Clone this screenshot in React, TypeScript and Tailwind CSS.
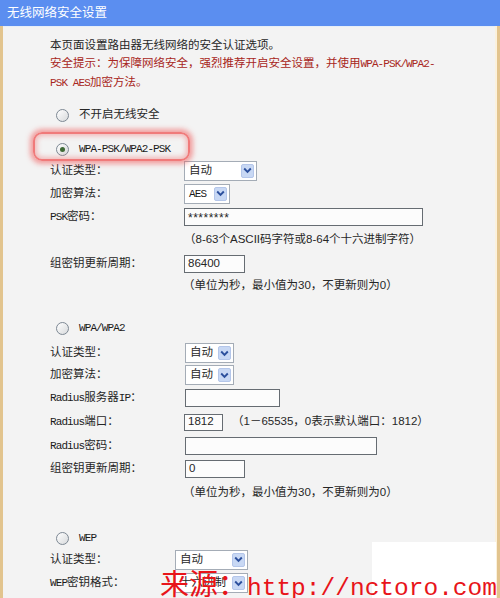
import React from "react";

const M = "font-['Liberation_Mono',monospace] text-[11px] tracking-[-0.9px] text-[#1a1a1a]";
const MR = "font-['Liberation_Mono',monospace] text-[11px] tracking-[-0.9px]";

function Radio({ checked = false }: { checked?: boolean }) {
  return (
    <span className="w-[13px] h-[13px] rounded-full border border-[#7d8893] bg-linear-to-br from-white to-[#d8dadc] flex items-center justify-center shrink-0">
      {checked && <span className="w-[5px] h-[5px] rounded-full bg-[#3f6a36]" />}
    </span>
  );
}

function Chevron() {
  return (
    <svg width="9" height="7" viewBox="0 0 9 7">
      <path d="M1.2 1.5 L4.5 4.8 L7.8 1.5" fill="none" stroke="#2b4f9c" strokeWidth="1.9" />
    </svg>
  );
}

function Select({ w, children }: { w: string; children: React.ReactNode }) {
  return (
    <div className={`${w} h-[20px] border border-[#a4acb6] bg-white flex items-center justify-between pl-[4px] pr-[2px]`}>
      <span className="leading-none">{children}</span>
      <span className="w-[13px] h-[14px] bg-[#c8d8f4] border border-[#b4c6ea] rounded-[2px] flex items-center justify-center">
        <Chevron />
      </span>
    </div>
  );
}

function Input({ w, h = "h-[18px]", children }: { w: string; h?: string; children?: React.ReactNode }) {
  return (
    <div className={`${w} ${h} border border-[#666c72] bg-[#fcfcfc] flex items-center px-[3px] leading-none`}>
      {children}
    </div>
  );
}

function Row({ label, lw, h, children }: { label: React.ReactNode; lw: string; h: string; children?: React.ReactNode }) {
  return (
    <div className={`flex items-center ${h}`}>
      <div className={`${lw} shrink-0`}>{label}</div>
      {children}
    </div>
  );
}

export default function App() {
  return (
    <div className="relative w-[500px] h-[598px] overflow-hidden bg-[#f3f3f3] font-['Liberation_Sans','Noto_Sans_CJK_SC',sans-serif] text-[11.5px] text-[#262626]">
      <div className="h-[26px] bg-[#5b8ef0] text-white text-[12.5px] pl-[7px] flex items-center">无线网络安全设置</div>
      <div className="flex h-[572px]">
        <div className="w-[3px] bg-[#e2c48e]" />
        <div className="flex-1 flex flex-col pl-[47px] border-t border-[#e6eef8]">
          <div className="pt-[9px] leading-[18px]">
            <div>本页面设置路由器无线网络的安全认证选项。</div>
            <div className="text-[#a82621]">
              安全提示：为保障网络安全，强烈推荐开启安全设置，并使用<span className={MR}>WPA-PSK/WPA2-</span>
            </div>
            <div className="text-[#a82621]">
              <span className={MR}>PSK AES</span>加密方法。
            </div>
          </div>

          <div className="mt-[13px] h-[20px] flex items-center gap-[10px] pl-[6px]">
            <Radio />
            <span>不开启无线安全</span>
          </div>

          <div className="mt-[14px] h-[20px] flex items-center gap-[10px] pl-[6px]">
            <Radio checked />
            <span className={M}>WPA-PSK/WPA2-PSK</span>
          </div>
          <Row label="认证类型：" lw="w-[134px]" h="h-[23px]">
            <Select w="w-[73px]">自动</Select>
          </Row>
          <Row label="加密算法：" lw="w-[134px]" h="h-[23px]">
            <Select w="w-[46px]"><span className={M}>AES</span></Select>
          </Row>
          <Row label={<><span className={M}>PSK</span>密码：</>} lw="w-[134px]" h="h-[23px]">
            <Input w="w-[239px]"><span className="text-[12px] tracking-[0.5px] pt-[3px]">********</span></Input>
          </Row>
          <div className="h-[24px] flex items-center pl-[134px]">（8-63个ASCII码字符或8-64个十六进制字符）</div>
          <Row label="组密钥更新周期：" lw="w-[134px]" h="h-[23px]">
            <Input w="w-[61px]">86400</Input>
          </Row>
          <div className="h-[22px] flex items-center pl-[133px]">（单位为秒，最小值为30，不更新则为0）</div>

          <div className="mt-[21px] h-[20px] flex items-center gap-[10px] pl-[6px]">
            <Radio />
            <span className={M}>WPA/WPA2</span>
          </div>
          <div className="h-[4px]" />
          <Row label="认证类型：" lw="w-[135px]" h="h-[22px]">
            <Select w="w-[49px]">自动</Select>
          </Row>
          <Row label="加密算法：" lw="w-[135px]" h="h-[22px]">
            <Select w="w-[49px]">自动</Select>
          </Row>
          <Row label={<><span className={M}>Radius</span>服务器<span className={M}>IP</span>：</>} lw="w-[135px]" h="h-[24px]">
            <Input w="w-[95px]" />
          </Row>
          <Row label={<><span className={M}>Radius</span>端口：</>} lw="w-[134px]" h="h-[24px]">
            <Input w="w-[39px]" h="h-[17px]">1812</Input>
            <span className="ml-[9px]">（1－65535，0表示默认端口：1812）</span>
          </Row>
          <Row label={<><span className={M}>Radius</span>密码：</>} lw="w-[135px]" h="h-[23px]">
            <Input w="w-[192px]" />
          </Row>
          <Row label="组密钥更新周期：" lw="w-[135px]" h="h-[24px]">
            <Input w="w-[60px]">0</Input>
          </Row>
          <div className="h-[24px] flex items-center pl-[133px]">（单位为秒，最小值为30，不更新则为0）</div>

          <div className="mt-[23px] h-[20px] flex items-center gap-[10px] pl-[6px]">
            <Radio />
            <span className={M}>WEP</span>
          </div>
          <Row label="认证类型：" lw="w-[125px]" h="h-[23px]">
            <Select w="w-[73px]">自动</Select>
          </Row>
          <Row label={<><span className={M}>WEP</span>密钥格式：</>} lw="w-[125px]" h="h-[24px]">
            <Select w="w-[73px]">十六进制</Select>
          </Row>
        </div>
        <div className="w-[2px] bg-[#fbf1dc]" />
        <div className="w-[3px] bg-[#e2c48e]" />
      </div>

      <div className="absolute left-[33px] top-[132px] w-[157px] h-[29px] rounded-[9px] border-2 border-[#f07a7a] shadow-[0_0_5px_3px_rgba(240,90,90,0.55),inset_0_0_5px_2px_rgba(240,110,110,0.45)]" />

      <div className="absolute left-[372px] top-[542px] w-[124px] h-[56px] bg-white" />
      <div className="absolute left-[160px] top-[568px] flex items-baseline leading-none text-[#e8141a]">
        <span className="font-['Noto_Sans_CJK_SC',sans-serif] text-[29px]">来源：</span>
        <span className="font-['Liberation_Mono',monospace] text-[24.5px]">http://nctoro.com</span>
      </div>
    </div>
  );
}
